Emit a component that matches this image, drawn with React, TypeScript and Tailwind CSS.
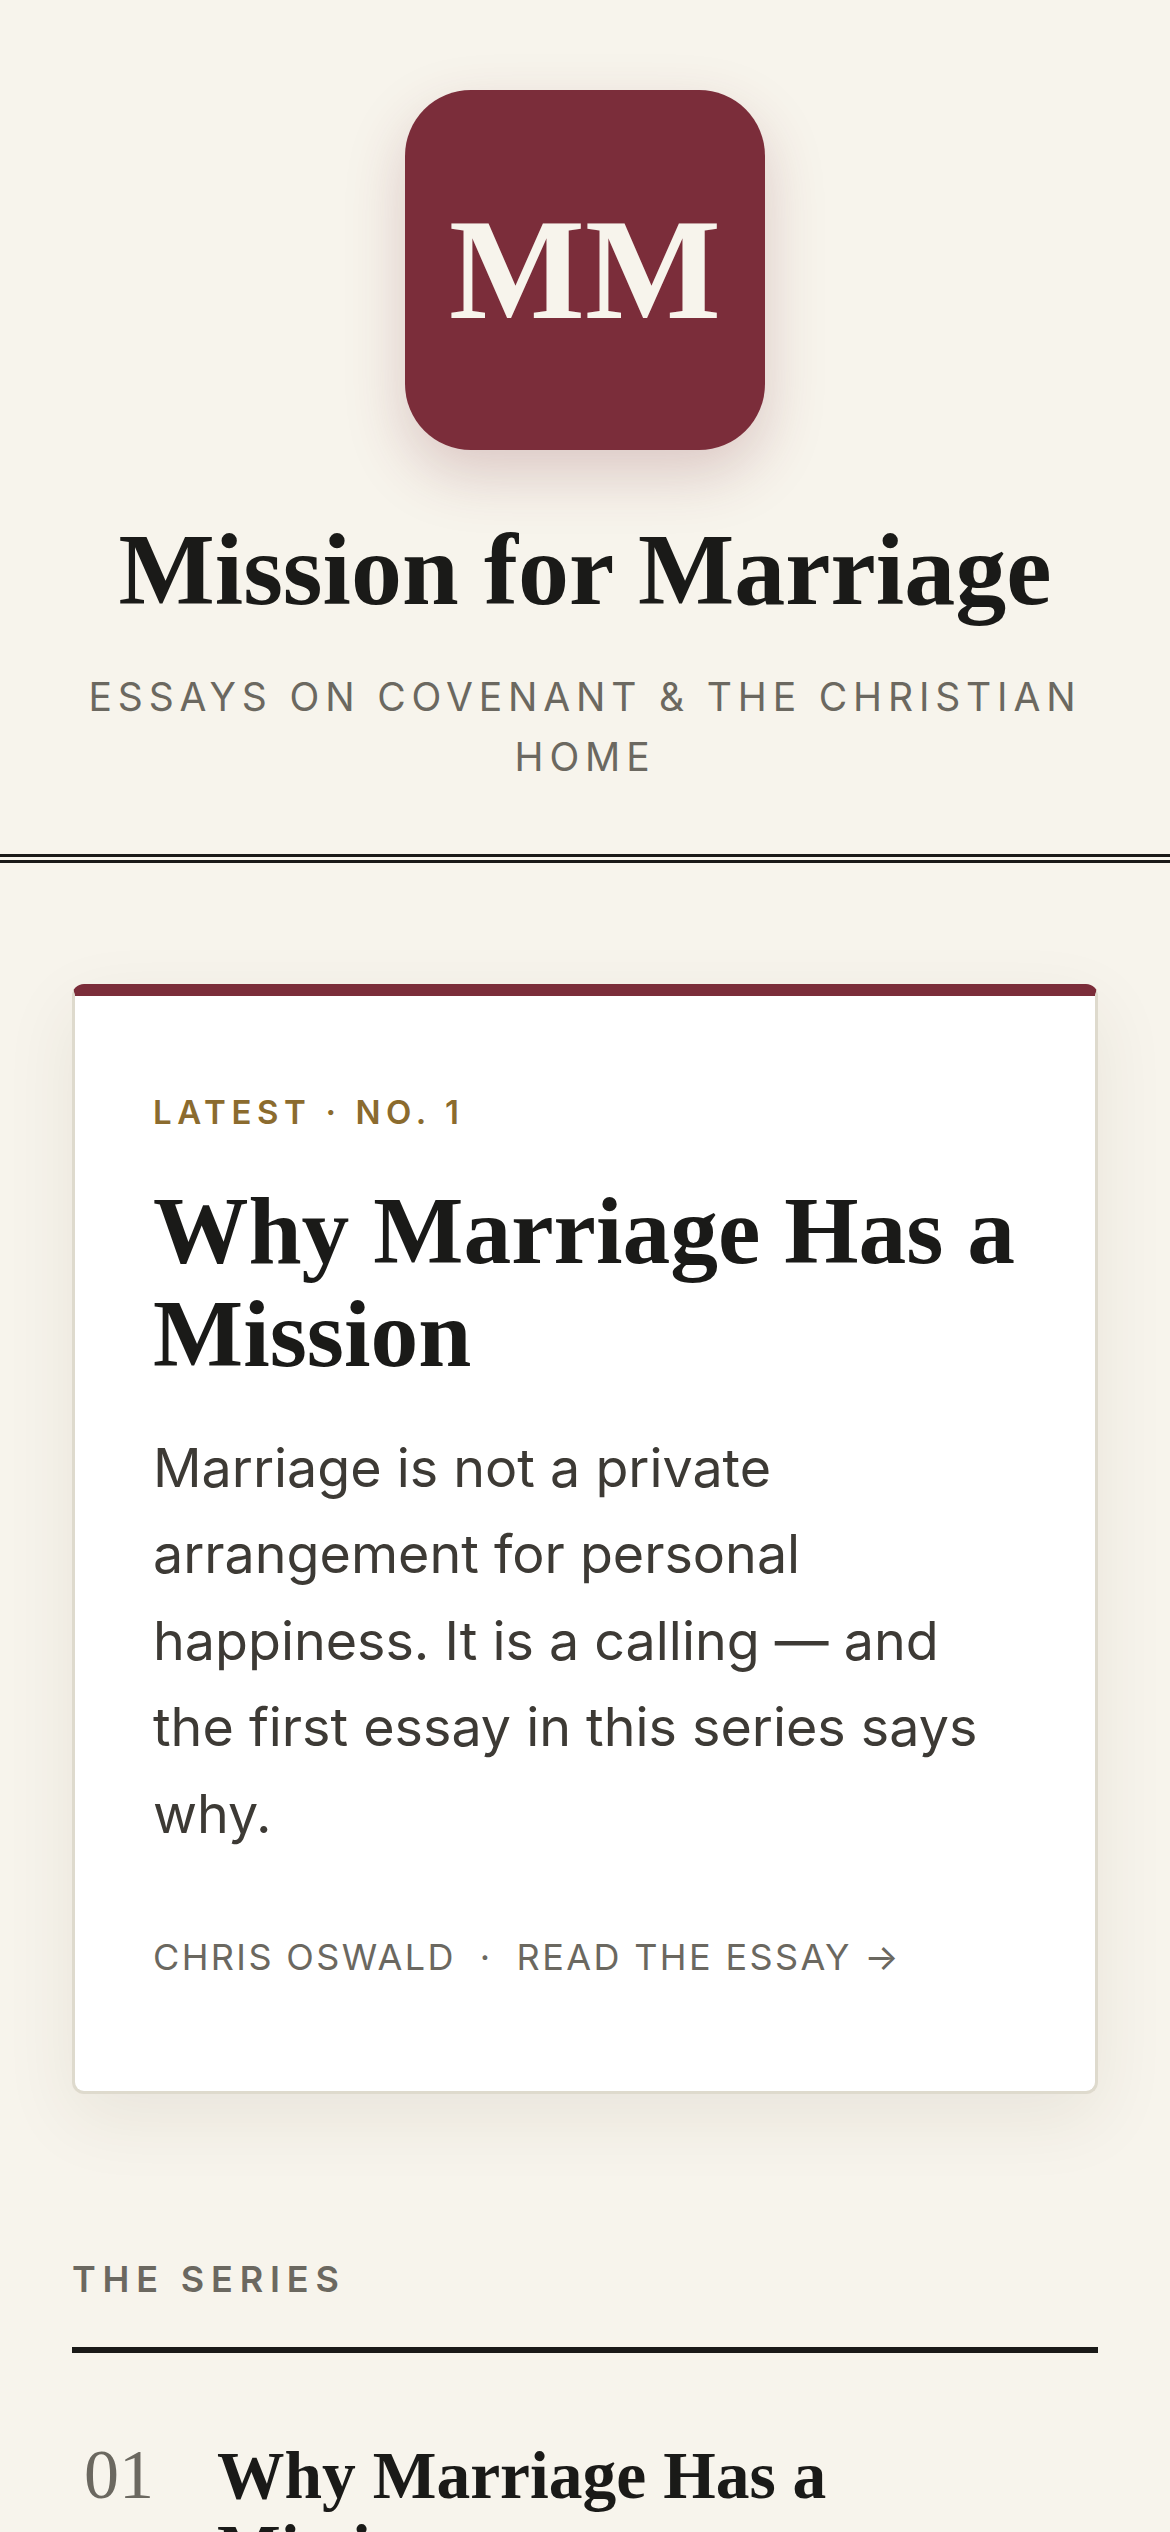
const serif = "font-['Liberation_Serif',serif]"

export default function App() {
  return (
    <div className="h-[2532px] overflow-hidden bg-[#f7f4ec] font-['Inter',sans-serif] text-[#1a1a18]">
      {/* Masthead */}
      <header className="flex flex-col items-center border-b-[9px] border-double border-[#1a1a18] px-[48px] pt-[90px] pb-[67px]">
        <div className="flex h-[360px] w-[360px] items-center justify-center rounded-[66px] bg-[#7b2d3a] shadow-[0_24px_60px_rgba(123,45,58,0.22)]">
          <span className={`${serif} text-[144px] leading-none font-bold text-[#f7f4ec]`}>MM</span>
        </div>
        <h1 className={`mt-[60px] ${serif} text-[102px] leading-[120px] font-bold`}>Mission for Marriage</h1>
        <p className="mt-[37px] text-center text-[39px] leading-[60px] tracking-[0.15em] text-[#6b6860]">ESSAYS ON COVENANT &amp; THE CHRISTIAN HOME</p>
      </header>

      <main className="px-[72px] pt-[121px]">
        {/* Latest essay */}
        <article className="rounded-[12px] border-[3px] border-t-[12px] border-[#dedacd] border-t-[#7b2d3a] bg-white pt-[96px] pr-[72px] pb-[107px] pl-[78px] shadow-[0_24px_72px_rgba(60,50,30,0.08)]">
          <p className="text-[33px] leading-[40px] font-semibold tracking-[0.17em] text-[#8b6b2e]">LATEST · NO. 1</p>
          <h2 className={`mt-[48px] ${serif} text-[95.5px] leading-[103px] font-bold`}>Why Marriage Has a Mission</h2>
          <p className="mt-[39px] text-[53.8px] leading-[86.4px] text-[#3d3a35]">Marriage is not a private arrangement for personal happiness. It is a calling — and the first essay in this series says why.</p>
          <p className="mt-[73px] flex gap-[24px] text-[36px] leading-[54px] tracking-[0.066em] text-[#6b6860]">
            <span>CHRIS OSWALD</span>
            <span>·</span>
            <span>READ THE ESSAY →</span>
          </p>
        </article>

        {/* Series list */}
        <section className="mt-[163px]">
          <h3 className="border-b-[6px] border-[#1a1a18] pb-[46px] text-[36px] leading-[44px] font-semibold tracking-[0.19em] text-[#6b6860]">THE SERIES</h3>
          <div className="mt-[80px] flex gap-[63px] px-[12px]">
            <span className={`${serif} text-[70px] leading-[84px] text-[#6b6860]`}>01</span>
            <h4 className={`mt-[6px] max-w-[700px] ${serif} text-[67.5px] leading-[73px] font-bold`}>Why Marriage Has a Mission</h4>
          </div>
        </section>
      </main>
    </div>
  )
}
